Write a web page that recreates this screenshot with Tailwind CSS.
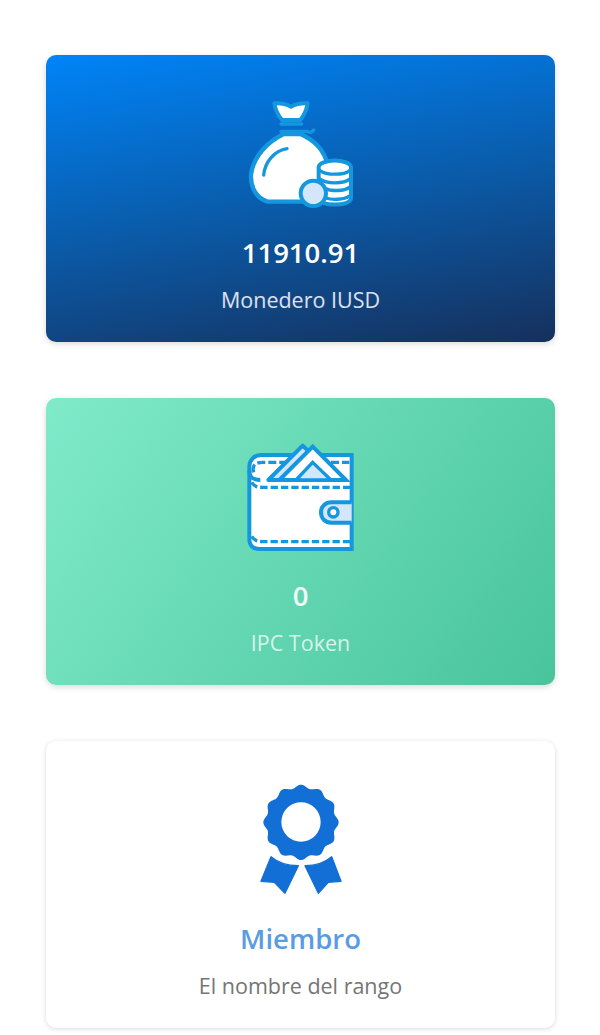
<!DOCTYPE html>
<html lang="en">
<head>
  <meta charset="UTF-8" />
  <meta name="viewport" content="width=device-width, initial-scale=1.0"/>
  <title>Panel</title>
  <script src="https://cdn.jsdelivr.net/npm/@tailwindcss/browser@4"></script>
</head>
<body class="bg-white font-['Open_Sans',sans-serif] h-[1035px] overflow-hidden">
  <div class="flex flex-col gap-[56px] pt-[55px] px-[46px] w-[601px]">

    <!-- monedero -->
    <div class="h-[287px] rounded-[10px] flex flex-col items-center pt-[35px] shadow-[0_2px_6px_rgba(0,0,0,0.15)] bg-[linear-gradient(170deg,#0084f8_0%,#0a5cab_50%,#16305c_100%)]">
      <svg class="w-[140px] h-[125px] shrink-0" viewBox="0 0 420 375" fill="none" stroke="#1597e0" stroke-width="12" stroke-linejoin="round" stroke-linecap="round">
        <path d="M130 40Q158 38 180 50Q202 38 230 40Q226 68 208 90H153Q134 68 130 40Z" fill="#fff"/>
        <path d="M150 102H212M150 124H212M212 124H228Q240 132 248 120" stroke-width="10"/>
        <path d="M158 132H208C250 150 280 180 290 225L290 335H110C75 325 58 290 60 255C66 200 110 155 158 132Z" fill="#fff" stroke-width="13"/>
        <path d="M98 255C102 215 130 182 168 176" stroke-width="10"/>
        <path d="M263 232C263 205 360 205 360 232V325C360 350 263 350 263 325Z" fill="#fff"/>
        <path d="M268 242C285 256 340 256 355 242M268 268C285 282 340 282 355 268M285 296C300 304 340 304 355 292M285 324C300 330 340 330 355 318" stroke-width="10"/>
        <circle cx="247" cy="310" r="38" fill="#d3e6fa"/>
      </svg>
      <div class="mt-[18px] text-[27.5px] leading-[40px] font-semibold text-white">11910.91</div>
      <div class="mt-[11px] text-[21.5px] leading-[32px] text-white/85">Monedero IUSD</div>
    </div>

    <!-- token -->
    <div class="h-[287px] rounded-[10px] flex flex-col items-center pt-[35px] shadow-[0_2px_6px_rgba(0,0,0,0.15)] bg-[linear-gradient(125deg,#80eac9_0%,#48c49c_100%)]">
      <svg class="w-[140px] h-[125px] shrink-0" viewBox="0 -6 420 375" fill="none" stroke="#1597e0" stroke-width="12" stroke-linejoin="miter" stroke-linecap="butt">
        <path d="M362 60V342H85C65 342 55 330 55 312V95C55 75 70 60 90 60Z" fill="#fff"/>
        <path d="M55 105C55 130 68 135 88 135"/>
        <path d="M68 112C62 90 75 82 95 82H170M300 82H355" stroke-width="10" stroke-dasharray="24 9"/>
        <path d="M62 142C72 158 85 157 100 157H360" stroke-width="10" stroke-dasharray="22 9"/>
        <path d="M62 304C72 320 85 320 100 320H360" stroke-width="10" stroke-dasharray="22 9"/>
        <path d="M112 135L215 32L240 55L160 135Z" fill="#d3e6fa" stroke-linejoin="round"/>
        <path d="M145 135L245 35L345 135Z" fill="#fff"/>
        <path d="M195 135L245 82L300 135Z" fill="#d3e6fa" stroke-width="10"/>
        <path d="M362 202H302C282 202 270 215 270 232C270 250 282 263 302 263H362" fill="#d3e6fa"/>
        <circle cx="307" cy="232" r="14" fill="#fff" stroke-width="10"/>
      </svg>
      <div class="mt-[18px] text-[27.5px] leading-[40px] font-semibold text-white/90">0</div>
      <div class="mt-[11px] text-[21.5px] leading-[32px] text-white/75">IPC Token</div>
    </div>

    <!-- rango -->
    <div class="h-[287px] rounded-[10px] bg-white flex flex-col items-center pt-[35px] shadow-[0_1px_5px_rgba(0,0,0,0.15)]">
      <svg class="w-[140px] h-[125px] shrink-0" viewBox="-30 3 420 375" fill="#126fd6">
        <path id="seal" fill-rule="evenodd"/>
        <path d="M90 245C110 262 135 272 172 272L132 355L100 322L60 319Z" stroke="#126fd6" stroke-width="4" stroke-linejoin="round"/>
        <path d="M272 245C252 262 228 272 192 272L232 355L262 322L300 319Z" stroke="#126fd6" stroke-width="4" stroke-linejoin="round"/>
      </svg>
      <div class="mt-[18px] text-[27.5px] leading-[40px] font-semibold text-[#5a9ce2]">Miembro</div>
      <div class="mt-[11px] text-[21.5px] leading-[32px] text-[#757575]">El nombre del rango</div>
    </div>

  </div>

  <script>
    // scalloped edge of the medal, 12 lobes, with the round hole cut out
    const pts = [];
    for (let i = 0; i < 240; i++) {
      const a = (i / 240) * Math.PI * 2;
      const r = 108 + 5 * Math.cos(12 * a);
      pts.push((180 + r * Math.cos(a)).toFixed(1) + " " + (142 + r * Math.sin(a)).toFixed(1));
    }
    const hole = "M180 82A59 59 0 1 0 180 200A59 59 0 1 0 180 82Z";
    document.getElementById("seal").setAttribute("d", "M" + pts.join("L") + "Z" + hole);
  </script>
</body>
</html>
